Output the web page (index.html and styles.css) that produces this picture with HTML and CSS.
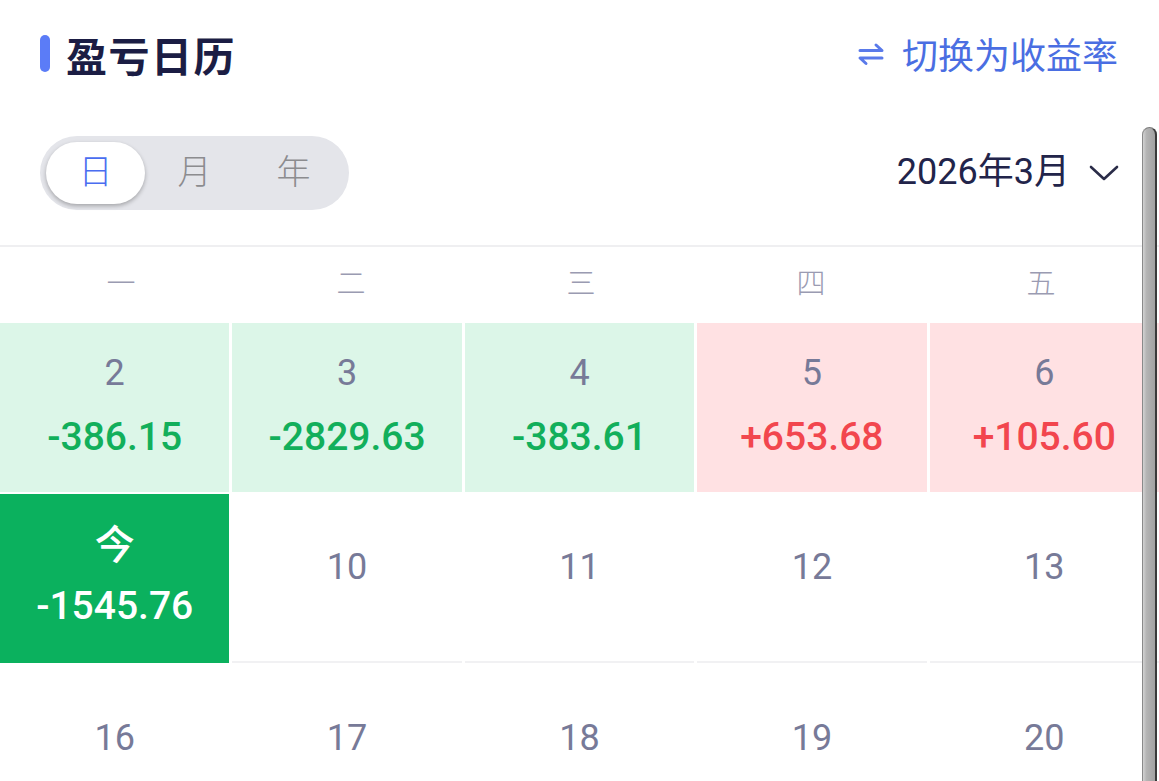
FILE: index.html
```html
<!DOCTYPE html>
<html lang="zh-CN">
<head>
<meta charset="utf-8">
<title>盈亏日历</title>
<link rel="stylesheet" href="styles.css">
</head>
<body>
<div class="page">
  <header class="header">
    <div class="title"><span class="accent"></span><h1>盈亏日历</h1></div>
    <div class="switch">
      <svg class="swap" width="26" height="24" viewBox="0 0 26 24" fill="none" stroke="currentColor" stroke-width="3" stroke-linecap="round" stroke-linejoin="round"><path d="M2 8.5 H24 L18 3"/><path d="M24 16 H2 L8 21.5"/></svg>
      <span>切换为收益率</span>
    </div>
  </header>
  <div class="toolbar">
    <div class="seg">
      <span class="seg-item active">日</span>
      <span class="seg-item">月</span>
      <span class="seg-item">年</span>
    </div>
    <div class="month"><span>2026年3月</span>
      <svg class="chev" width="32" height="18" viewBox="0 0 32 18" fill="none" stroke="currentColor" stroke-width="2.6" stroke-linecap="round" stroke-linejoin="round"><path d="M3 3 L16 15 L29 3"/></svg>
    </div>
  </div>
  <div class="divider"></div>
  <div class="weekdays">
    <span>一</span><span>二</span><span>三</span><span>四</span><span>五</span>
  </div>
  <div class="grid">
    <div class="cell loss"><span class="day">2</span><span class="val">-386.15</span></div>
    <div class="cell loss"><span class="day">3</span><span class="val">-2829.63</span></div>
    <div class="cell loss"><span class="day">4</span><span class="val">-383.61</span></div>
    <div class="cell gain"><span class="day">5</span><span class="val">+653.68</span></div>
    <div class="cell gain"><span class="day">6</span><span class="val">+105.60</span></div>

    <div class="cell today"><span class="day">今</span><span class="val">-1545.76</span></div>
    <div class="cell empty"><span class="day">10</span></div>
    <div class="cell empty"><span class="day">11</span></div>
    <div class="cell empty"><span class="day">12</span></div>
    <div class="cell empty"><span class="day">13</span></div>

    <div class="cell empty"><span class="day">16</span></div>
    <div class="cell empty"><span class="day">17</span></div>
    <div class="cell empty"><span class="day">18</span></div>
    <div class="cell empty"><span class="day">19</span></div>
    <div class="cell empty"><span class="day">20</span></div>
  </div>
  <div class="scrollbar"></div>
</div>
</body>
</html>
```

FILE: styles.css
```css
html, body {
  margin: 0;
  padding: 0;
  overflow: hidden;
  background: #ffffff;
}

body {
  font-family: Roboto, "Noto Sans CJK SC", sans-serif;
  width: 1159px;
  height: 781px;
}

.page {
  position: relative;
  width: 1159px;
  height: 781px;
  overflow: hidden;
}

.header {
  height: 106px;
  padding: 0 41px 0 40px;
  display: flex;
  align-items: center;
  justify-content: space-between;
  box-sizing: border-box;
}

.title {
  display: flex;
  align-items: center;
  gap: 16px;
}

.accent {
  width: 10px;
  height: 37px;
  border-radius: 5px;
  background: #5b7cf7;
}

.title h1 {
  margin: 0;
  font-family: "Noto Sans CJK SC", sans-serif;
  font-size: 41px;
  font-weight: 700;
  letter-spacing: 1.5px;
  color: #1b1d44;
  line-height: 1;
  padding-top: 2px;
}

.switch {
  display: flex;
  align-items: center;
  gap: 18px;
  color: #4a6ee2;
  font-family: "Noto Sans CJK SC", sans-serif;
  font-size: 36px;
  line-height: 1;
}

.swap {
  color: #5a7aea;
  margin-top: 2px;
}

.toolbar {
  display: flex;
  align-items: center;
  justify-content: space-between;
  padding: 30px 39px 35px 40px;
}

.seg {
  display: flex;
  padding: 6px;
  height: 74px;
  box-sizing: border-box;
  border-radius: 37px;
  background: #e4e5ea;
}

.seg-item {
  width: 99px;
  height: 62px;
  box-sizing: border-box;
  padding-bottom: 7px;
  display: flex;
  align-items: center;
  justify-content: center;
  font-family: "Noto Sans CJK SC", sans-serif;
  font-size: 34px;
  font-weight: 300;
  color: #8c8c8f;
  border-radius: 31px;
}

.seg-item.active {
  background: #ffffff;
  color: #4a6df0;
  box-shadow: 0 2px 4px rgba(0, 0, 0, 0.28);
}

.month {
  display: flex;
  align-items: center;
  gap: 18px;
  font-size: 36px;
  color: #22244a;
  line-height: 1;
  padding-bottom: 2px;
}

.chev {
  color: #2a2c48;
  margin-top: 2px;
}

.divider {
  height: 2px;
  background: #efeff1;
}

.weekdays {
  display: grid;
  grid-template-columns: repeat(5, 230px);
  padding-left: 6px;
  padding-bottom: 8px;
  box-sizing: border-box;
  height: 75px;
  align-items: center;
  justify-items: center;
  font-family: "Noto Sans CJK SC", sans-serif;
  font-size: 29px;
  font-weight: 300;
  color: #9a9bb2;
}

.grid {
  display: grid;
  grid-template-columns: repeat(5, 1fr);
  grid-auto-rows: 169px;
  column-gap: 3px;
  row-gap: 2px;
  margin-top: 1px;
}

.cell {
  display: flex;
  flex-direction: column;
  align-items: center;
  padding-top: 28px;
  box-sizing: border-box;
}

.day {
  font-size: 36px;
  line-height: 44px;
  color: #777a98;
}

.val {
  margin-top: 22px;
  font-size: 39px;
  font-weight: 500;
  line-height: 40px;
}

.cell.loss {
  background: #dcf6e8;
}

.cell.loss .val {
  color: #12af5b;
}

.cell.gain {
  background: #ffe1e3;
}

.cell.gain .val {
  color: #f2464e;
}

.cell.today {
  background: #0bb15e;
  padding-top: 26px;
}

.cell.today .day {
  font-family: "Noto Sans CJK SC", sans-serif;
  font-size: 40px;
  font-weight: 500;
  color: #ffffff;
}

.cell.today .val {
  color: #ffffff;
}

.cell.empty {
  padding-top: 51px;
  border-bottom: 2px solid #f1f1f3;
}

.scrollbar {
  position: absolute;
  left: 1142px;
  top: 127px;
  width: 15px;
  height: 700px;
  box-sizing: border-box;
  border-radius: 8px 8px 0 0;
  border-left: 1px solid #8a8a8a;
  border-right: 2px solid #3a3a3a;
  border-top: 1px solid #7a7a7a;
  background: linear-gradient(to right, #d2d2d2 0%, #b4b4b4 30%, #a2a2a2 100%);
}
```
